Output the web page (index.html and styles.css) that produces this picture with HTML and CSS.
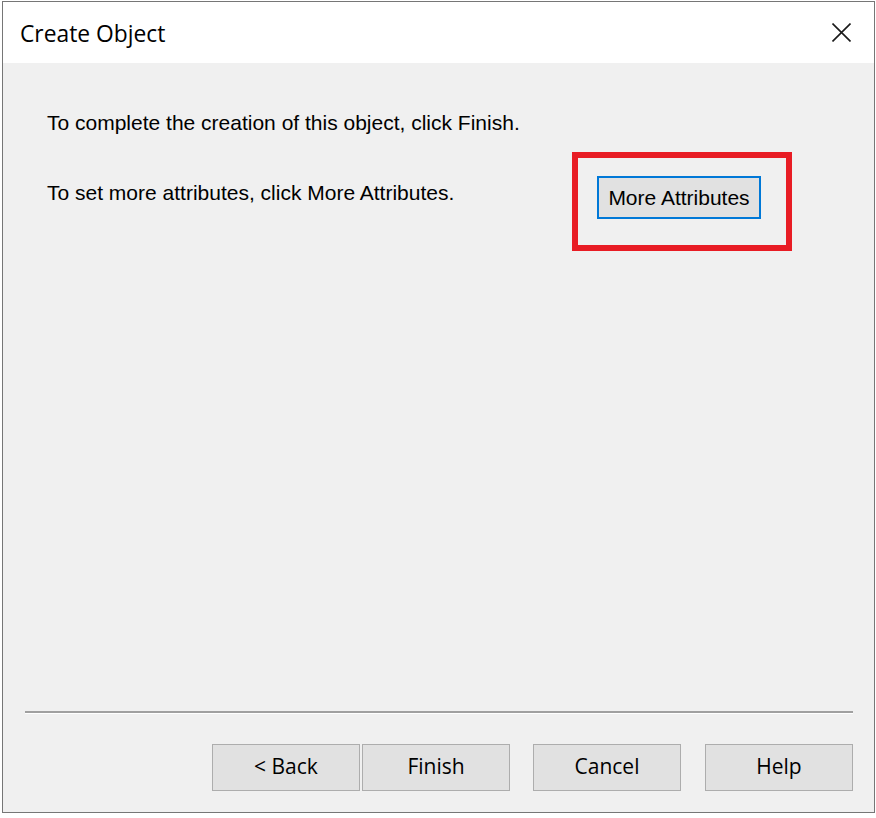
FILE: index.html
```html
<!DOCTYPE html>
<html>
<head>
<meta charset="utf-8">
<title>Create Object</title>
<link rel="stylesheet" href="styles.css">
</head>
<body>
<div class="window">
  <div class="titlebar">
    <span class="title">Create Object</span>
    <button class="close" aria-label="Close">
      <svg width="19" height="19" viewBox="0 0 19 19"><path d="M0.5 0.5 L18.5 18.5 M18.5 0.5 L0.5 18.5" stroke="#1a1a1a" stroke-width="1.6" fill="none"/></svg>
    </button>
  </div>
  <div class="body">
    <div class="content">
      <p class="line first">To complete the creation of this object, click Finish.</p>
      <div class="row">
        <p class="line second">To set more attributes, click More Attributes.</p>
        <div class="highlight">
          <button class="btn focused">More Attributes</button>
        </div>
      </div>
    </div>
    <div class="footer">
      <div class="separator"></div>
      <div class="actions">
        <button class="btn nav back">&lt; Back</button>
        <button class="btn nav finish">Finish</button>
        <button class="btn nav cancel">Cancel</button>
        <button class="btn nav help">Help</button>
      </div>
    </div>
  </div>
</div>
</body>
</html>
```
FILE: styles.css
```css
* { box-sizing: border-box; }
html, body { margin: 0; padding: 0; background: #ffffff; }
body { padding: 1px 0 0 2px; width: 876px; height: 818px; overflow: hidden; }

.window {
  width: 873px;
  height: 812px;
  border: 1px solid #767676;
  display: flex;
  flex-direction: column;
  background: #f0f0f0;
}

.titlebar {
  height: 61px;
  background: #ffffff;
  display: flex;
  align-items: center;
  justify-content: space-between;
  padding: 0 23px 0 17px;
  flex: none;
}
.title {
  font-family: "Open Sans", "Noto Sans", sans-serif;
  font-size: 22.8px;
  color: #000;
  margin-top: 1px;
}
.close {
  border: 0;
  background: transparent;
  padding: 0;
  width: 19px;
  height: 19px;
  display: block;
  margin-top: 0;
}
.close svg { display: block; }

.body {
  flex: 1;
  display: flex;
  flex-direction: column;
}

.content {
  flex: 1;
  padding: 48px 82px 0 44px;
  font-family: "Liberation Sans", Arial, sans-serif;
  font-size: 21px;
  color: #000;
}
.line { margin: 0; line-height: 24px; }
.row {
  display: flex;
  justify-content: space-between;
  align-items: flex-start;
  margin-top: 17px;
}
.second { margin-top: 29px; }

.highlight {
  width: 220px;
  height: 99px;
  border: 6px solid #e81c24;
  padding: 18px 0 0 19px;
}

.btn {
  font-family: "Liberation Sans", Arial, sans-serif;
  font-size: 21px;
  color: #000;
  background: #e1e1e1;
  border: 1px solid #adadad;
  padding: 0;
  margin: 0;
}
.focused {
  width: 164px;
  height: 43px;
  border: 2px solid #0078d7;
  display: block;
  padding-top: 1px;
}

.footer { flex: none; padding: 0 21px 21px 22px; }
.separator {
  height: 3px;
  border-top: 2px solid #a0a0a0;
  border-bottom: 1px solid #ffffff;
  margin-top: -1px;
}
.actions {
  display: flex;
  justify-content: flex-end;
  margin-top: 30px;
}
.nav {
  width: 148px;
  height: 47px;
  font-family: "Open Sans", "Noto Sans", sans-serif;
  font-size: 21px;
  padding-bottom: 3px;
}
.finish { margin-left: 2px; }
.cancel { margin-left: 23px; }
.help { margin-left: 24px; }
```
